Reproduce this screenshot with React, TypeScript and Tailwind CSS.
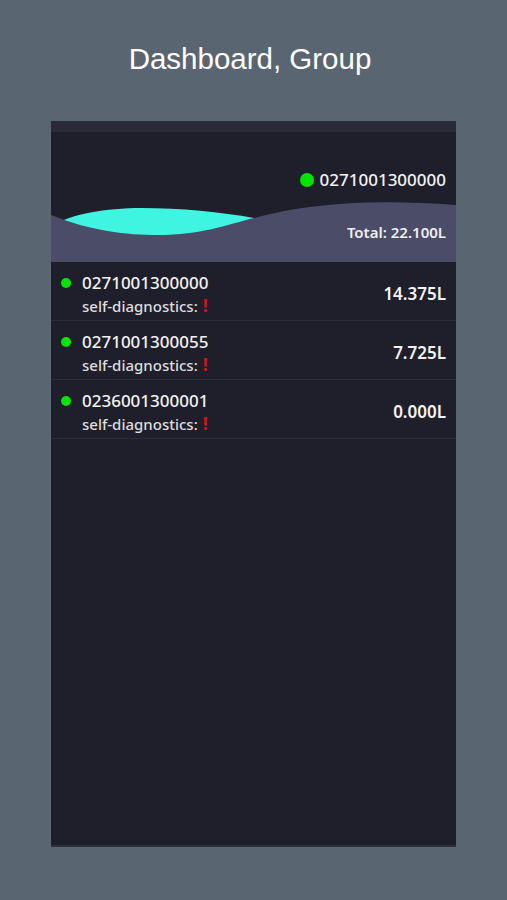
import React from "react";

const devices = [
  { id: "0271001300000", value: "14.375L" },
  { id: "0271001300055", value: "7.725L" },
  { id: "0236001300001", value: "0.000L" },
];

const font = { fontFamily: '"Noto Sans", "Open Sans", sans-serif' };

const App = () => {
  return (
    <div className="min-h-[900px] w-full bg-[#5a6572] pt-[41px]">
      <h1 className="pr-[7px] text-center text-[29.5px] leading-[36px] text-white font-['Liberation_Sans',Arial,sans-serif]">
        Dashboard, Group
      </h1>

      <div
        className="mx-auto mt-[44px] flex h-[726px] w-[405px] flex-col bg-[#1f1f2c] border-b-2 border-[#2e2e3d]"
        style={font}
      >
        {/* top strip */}
        <div className="h-[11px] bg-[#2a2a38]" />

        {/* header with wave */}
        <div className="relative h-[130px] overflow-hidden">
          <svg
            className="absolute inset-0 h-full w-full"
            viewBox="0 0 405 130"
            preserveAspectRatio="none"
          >
            <path
              d="M0,94 C20,82 55,76 90,76 C130,76 170,80 203,86 C240,92 280,100 405,110 L405,130 L0,130 Z"
              fill="#3ff5e2"
            />
            <path
              d="M0,83 C40,99 75,103 107,103 C150,103 175,93 203,86 C260,71 320,67 405,73 L405,130 L0,130 Z"
              fill="#4a4c68"
            />
          </svg>
          <div className="relative flex h-full flex-col items-end pr-[10px]">
            <div className="mt-[36px] flex items-center gap-[6px]">
              <span className="h-[14px] w-[14px] rounded-full bg-[#00e600]" />
              <span className="text-[17px] font-medium leading-[24px] text-[#f2f2f2]">
                0271001300000
              </span>
            </div>
            <div className="mt-[30px] text-[15px] font-semibold leading-[20px] text-[#eeeeee]">
              Total: 22.100L
            </div>
          </div>
        </div>

        {/* device list */}
        {devices.map((d) => (
          <div
            key={d.id}
            className="flex h-[59px] items-center justify-between border-b border-[#2c2c3a] pl-[10px] pr-[10px]"
          >
            <div className="flex items-start self-start pt-[10px]">
              <span className="mt-[6px] h-[10px] w-[10px] rounded-full bg-[#00e600]" />
              <div className="ml-[11px] flex flex-col">
                <span className="text-[17px] font-medium leading-[22px] text-[#f2f2f2]">
                  {d.id}
                </span>
                <span className="text-[15px] font-medium leading-[24px] text-[#dddddd]">
                  self-diagnostics:
                  <span className="ml-[5px] text-[18px] font-bold leading-[20px] text-[#d01515]">!</span>
                </span>
              </div>
            </div>
            <span className="mt-[5px] text-[17px] font-semibold text-[#f2f2f2]">{d.value}</span>
          </div>
        ))}
      </div>
    </div>
  );
};

export default App;
